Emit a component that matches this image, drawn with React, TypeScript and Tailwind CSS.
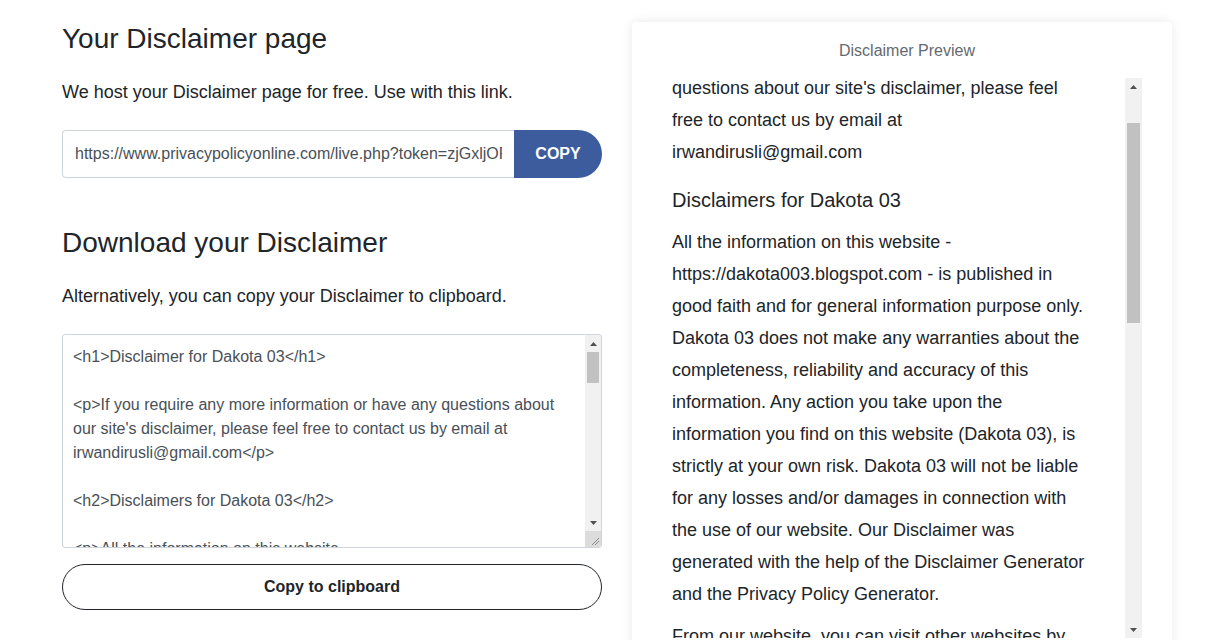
import React from "react";

function ArrowUp() {
  return (
    <svg width="7" height="4" viewBox="0 0 7 4" className="block">
      <path d="M0 4 L3.5 0 L7 4 Z" fill="#505050" />
    </svg>
  );
}

function ArrowDown() {
  return (
    <svg width="7" height="4" viewBox="0 0 7 4" className="block">
      <path d="M0 0 L7 0 L3.5 4 Z" fill="#505050" />
    </svg>
  );
}

const previewParas: { type: "p" | "h2"; text: string }[] = [
  {
    type: "p",
    text: "questions about our site's disclaimer, please feel free to contact us by email at irwandirusli@gmail.com",
  },
  { type: "h2", text: "Disclaimers for Dakota 03" },
  {
    type: "p",
    text: "All the information on this website - https://dakota003.blogspot.com - is published in good faith and for general information purpose only. Dakota 03 does not make any warranties about the completeness, reliability and accuracy of this information. Any action you take upon the information you find on this website (Dakota 03), is strictly at your own risk. Dakota 03 will not be liable for any losses and/or damages in connection with the use of our website. Our Disclaimer was generated with the help of the Disclaimer Generator and the Privacy Policy Generator.",
  },
  {
    type: "p",
    text: "From our website, you can visit other websites by following hyperlinks to such external sites.",
  },
];

export default function App() {
  return (
    <div
      className="h-screen bg-white text-[#212529] overflow-hidden"
      style={{ fontFamily: '"Liberation Sans", Arial, sans-serif' }}
    >
      <div className="flex gap-[30px] pl-[62px] pt-[22px]">
        {/* Left column */}
        <div className="w-[540px] shrink-0">
          <h1 className="mt-[1px] text-[28px] leading-[32px] font-normal">Your Disclaimer page</h1>
          <p className="mt-[23px] text-[18px] leading-[28px]">
            We host your Disclaimer page for free. Use with this link.
          </p>
          <div className="mt-6 flex h-12">
            <input
              readOnly
              value="https://www.privacypolicyonline.com/live.php?token=zjGxljOFk2mN8aQ"
              className="flex-1 min-w-0 h-12 border border-[#ced4da] border-r-0 rounded-l-[4px] px-3 text-[16px] text-[#495057] outline-none bg-white"
              style={{ fontFamily: '"Liberation Sans", Arial, sans-serif' }}
            />
            <button className="w-[88px] shrink-0 bg-[#3d5c9e] text-white font-bold text-[16px] rounded-r-full">
              COPY
            </button>
          </div>

          <h2 className="mt-[49px] text-[28px] leading-[32px] font-normal">Download your Disclaimer</h2>
          <p className="mt-[23px] text-[18px] leading-[28px]">
            Alternatively, you can copy your Disclaimer to clipboard.
          </p>

          {/* textarea lookalike */}
          <div className="mt-6 h-[214px] border border-[#ced4da] rounded-[3px] flex overflow-hidden">
            <div className="flex-1 min-w-0 pl-[10px] pr-[10px] pt-[10px] text-[16px] leading-[24px] text-[#495057] overflow-hidden">
              <div>&lt;h1&gt;Disclaimer for Dakota 03&lt;/h1&gt;</div>
              <div className="h-6" />
              <div>
                &lt;p&gt;If you require any more information or have any questions about our site's disclaimer,
                please feel free to contact us by email at irwandirusli@gmail.com&lt;/p&gt;
              </div>
              <div className="h-6" />
              <div>&lt;h2&gt;Disclaimers for Dakota 03&lt;/h2&gt;</div>
              <div className="h-6" />
              <div>&lt;p&gt;All the information on this website</div>
            </div>
            <div className="w-[16px] shrink-0 bg-[#f1f1f1] flex flex-col">
              <div className="h-[17px] flex items-center justify-center">
                <ArrowUp />
              </div>
              <div className="mx-[2px] h-[31px] bg-[#c1c1c1]" />
              <div className="flex-1" />
              <div className="h-[17px] flex items-center justify-center">
                <ArrowDown />
              </div>
              <div className="h-[16px] bg-[#dcdcdc] flex items-end justify-end p-[2px]">
                <svg width="8" height="8" viewBox="0 0 8 8">
                  <path d="M1 8 L8 1 M4 8 L8 4" stroke="#8a8a8a" strokeWidth="1" />
                </svg>
              </div>
            </div>
          </div>

          <button className="mt-4 w-full h-[46px] border border-[#212529] rounded-full text-[16px] font-bold text-[#212529] bg-white">
            Copy to clipboard
          </button>
        </div>

        {/* Right column: preview card */}
        <div className="w-[540px] shrink-0 bg-white rounded-[4px] shadow-[0_0_12px_rgba(0,0,0,0.09)] pt-[17px] pl-10 pr-[30px] h-[640px]">
          <div className="text-center text-[16px] leading-[24px] text-[#666a70]">Disclaimer Preview</div>
          <div className="mt-[15px] h-[560px] flex">
            <div className="flex-1 min-w-0 overflow-hidden">
              <div className="w-[416px] -mt-[6px] text-[18px] leading-[32px] text-[#212529]">
                {previewParas.map((p, i) =>
                  p.type === "h2" ? (
                    <h3 key={i} className="mt-[20px] mb-[14px] text-[20px] leading-[24px] font-normal">
                      {p.text}
                    </h3>
                  ) : (
                    <p key={i} className="mb-[10px]">
                      {p.text}
                    </p>
                  )
                )}
              </div>
            </div>
            <div className="w-[17px] shrink-0 bg-[#f1f1f1] flex flex-col">
              <div className="h-[17px] flex items-center justify-center">
                <ArrowUp />
              </div>
              <div className="h-[28px]" />
              <div className="mx-[2px] h-[200px] bg-[#c1c1c1]" />
              <div className="flex-1" />
              <div className="h-[17px] flex items-center justify-center">
                <ArrowDown />
              </div>
            </div>
          </div>
        </div>
      </div>
    </div>
  );
}
